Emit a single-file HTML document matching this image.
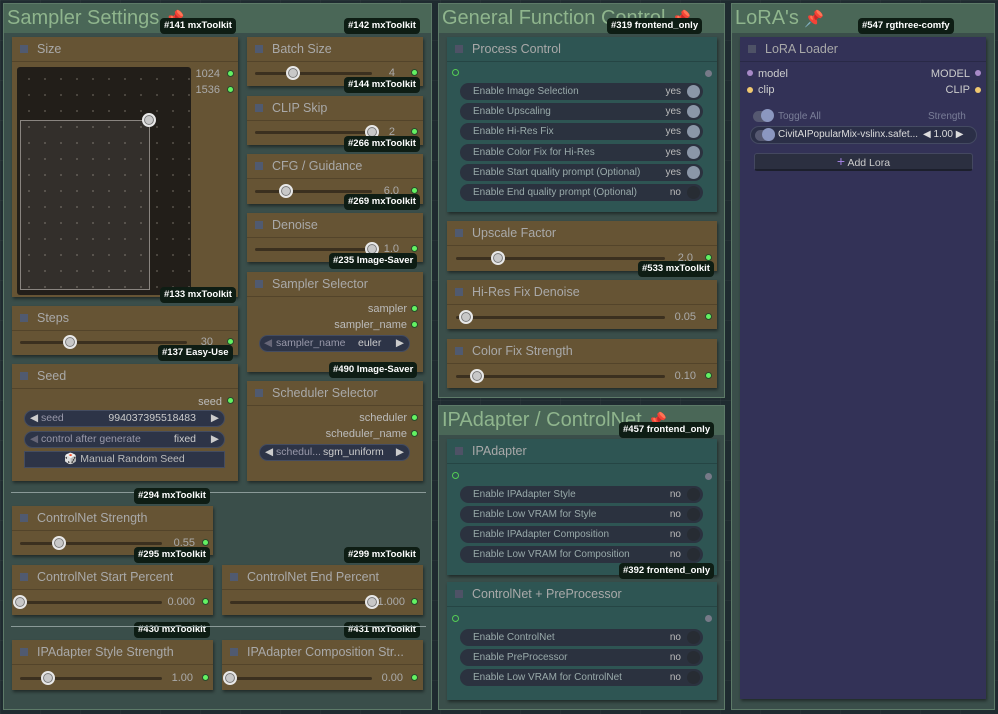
<!DOCTYPE html>
<html><head><meta charset="utf-8"><style>
*{box-sizing:border-box;margin:0;padding:0}
body{width:998px;height:714px;background:#1f2b30;font-family:"Liberation Sans",sans-serif;position:relative;overflow:hidden;
background-image:linear-gradient(rgba(255,255,255,.03) 1px,transparent 1px),linear-gradient(90deg,rgba(255,255,255,.03) 1px,transparent 1px);background-size:40px 40px}
.a{position:absolute}
.g{position:absolute;background:#3a4e4a;border:1px solid #5d7a68}
.gt{position:absolute;left:0;top:0;right:0;height:29px;background:#4a6757;color:#8fb58d;font-size:20px;line-height:29px;padding-left:3px;white-space:nowrap;overflow:hidden}
.n{position:absolute;background:#665434;box-shadow:1px 2px 3px rgba(0,0,0,.45)}
.n.teal{background:#2e5553}
.n.pur{background:#333257}
.t{height:25px;border-bottom:1px solid rgba(0,0,0,.18);color:#a9a9a9;font-size:12.5px;line-height:24px;padding-left:25px;position:relative;white-space:nowrap;overflow:hidden}
.t:before{content:"";position:absolute;left:8px;top:8px;width:8px;height:8px;background:#505a70}
.teal .t:before,.pur .t:before{background:#4e5266}
.b{position:absolute;background:#0e1d14;color:#fff;font-size:9.5px;font-weight:bold;height:16px;line-height:16px;padding:0 4px;border-radius:4px;white-space:nowrap;z-index:5}
.trk{position:absolute;height:3px;background:#3b301f;border-radius:2px}
.k{position:absolute;width:14px;height:14px;border-radius:50%;background:#c8c8c8;border:2px solid #e8e8e8;box-shadow:0 0 0 1px #777 inset;z-index:2}
.v{position:absolute;width:50px;text-align:right;color:#aaa;font-size:11px}
.d{position:absolute;width:7px;height:7px;border-radius:50%;background:#63f263;border:1px solid #2a4a2a}
.lbl{position:absolute;color:#bbb;font-size:11px;text-align:right;width:120px}
.pill{position:absolute;height:17px;border-radius:9px;background:#2b323f;color:#9aa;font-size:10px;line-height:17px;padding-left:13px;white-space:nowrap}
.pill .y{position:absolute;right:22px;top:0;color:#bbb}
.pill .c{position:absolute;right:3px;top:2px;width:13px;height:13px;border-radius:50%;background:#8b97a8}
.pill .c.off{background:#272c33}
.cb{position:absolute;height:17px;border-radius:9px;background:#2d3447;border:1px solid #444c60;color:#aaa;font-size:10.5px;line-height:15px}
.pin{color:#e23a6a;font-size:16px}
</style></head><body>

<div class="g" style="left:3px;top:3px;width:429px;height:707px"><div class="gt">Sampler Settings <span class="pin">📌</span></div></div>
<div class="g" style="left:438px;top:3px;width:287px;height:395px"><div class="gt">General Function Control <span class="pin">📌</span></div></div>
<div class="g" style="left:438px;top:405px;width:287px;height:305px"><div class="gt">IPAdapter / ControlNet <span class="pin">📌</span></div></div>
<div class="g" style="left:731px;top:3px;width:264px;height:707px"><div class="gt">LoRA's <span class="pin">📌</span></div></div>

<div class="n" style="left:12px;top:37px;width:226px;height:260px"><div class="t">Size</div></div>
<div class="a" style="left:17px;top:67px;width:174px;height:228px;background:#221e19;border-radius:3px;background-image:radial-gradient(#57524a 0.8px,transparent 1px);background-size:16px 16px;background-position:4px 4px"></div>
<div class="a" style="left:20px;top:120px;width:130px;height:170px;border:1px solid #8a8580;background:rgba(255,255,255,.08)"></div>
<div class="k" style="left:142px;top:113px"></div>
<div class="v" style="left:170px;top:68px">1024</div><div class="d" style="left:227px;top:70px"></div>
<div class="v" style="left:170px;top:84px">1536</div><div class="d" style="left:227px;top:86px"></div>

<div class="n" style="left:247px;top:37px;width:176px;height:49px"><div class="t">Batch Size</div></div>
<div class="trk" style="left:255px;top:72px;width:117px"></div><div class="k" style="left:286px;top:66px"></div><div class="v" style="left:345px;top:67px">4</div><div class="d" style="left:411px;top:69px"></div>
<div class="n" style="left:247px;top:96px;width:176px;height:49px"><div class="t">CLIP Skip</div></div>
<div class="trk" style="left:255px;top:131px;width:117px"></div><div class="k" style="left:365px;top:125px"></div><div class="v" style="left:345px;top:126px">2</div><div class="d" style="left:411px;top:128px"></div>
<div class="n" style="left:247px;top:154px;width:176px;height:50px"><div class="t">CFG / Guidance</div></div>
<div class="trk" style="left:255px;top:190px;width:117px"></div><div class="k" style="left:279px;top:184px"></div><div class="v" style="left:349px;top:185px">6.0</div><div class="d" style="left:411px;top:187px"></div>
<div class="n" style="left:247px;top:213px;width:176px;height:49px"><div class="t">Denoise</div></div>
<div class="trk" style="left:255px;top:248px;width:117px"></div><div class="k" style="left:365px;top:242px"></div><div class="v" style="left:349px;top:243px">1.0</div><div class="d" style="left:411px;top:245px"></div>

<div class="n" style="left:247px;top:272px;width:176px;height:100px"><div class="t">Sampler Selector</div></div>
<div class="lbl" style="left:287px;top:303px">sampler</div><div class="d" style="left:411px;top:305px"></div>
<div class="lbl" style="left:287px;top:319px">sampler_name</div><div class="d" style="left:411px;top:321px"></div>
<div class="cb" style="left:259px;top:335px;width:151px"><span class="a" style="left:4px;color:#667">◀</span><span class="a" style="left:16px;color:#99a">sampler_name</span><span class="a" style="left:98px;color:#ccc">euler</span><span class="a" style="right:5px;color:#ccc">▶</span></div>

<div class="n" style="left:247px;top:381px;width:176px;height:100px"><div class="t">Scheduler Selector</div></div>
<div class="lbl" style="left:287px;top:412px">scheduler</div><div class="d" style="left:411px;top:414px"></div>
<div class="lbl" style="left:287px;top:428px">scheduler_name</div><div class="d" style="left:411px;top:430px"></div>
<div class="cb" style="left:259px;top:444px;width:151px"><span class="a" style="left:5px;color:#ccc">◀</span><span class="a" style="left:16px;color:#99a">schedul...</span><span class="a" style="left:63px;color:#ccc">sgm_uniform</span><span class="a" style="right:5px;color:#ccc">▶</span></div>

<div class="n" style="left:12px;top:306px;width:226px;height:49px"><div class="t">Steps</div></div>
<div class="trk" style="left:20px;top:341px;width:167px"></div><div class="k" style="left:63px;top:335px"></div><div class="v" style="left:163px;top:336px">30</div><div class="d" style="left:227px;top:338px"></div>

<div class="n" style="left:12px;top:364px;width:226px;height:117px"><div class="t">Seed</div></div>
<div class="lbl" style="left:102px;top:396px">seed</div><div class="d" style="left:227px;top:397px"></div>
<div class="cb" style="left:24px;top:410px;width:201px"><span class="a" style="left:5px;color:#ccc">◀</span><span class="a" style="left:16px;color:#99a">seed</span><span class="a" style="right:28px;color:#ccc">994037395518483</span><span class="a" style="right:5px;color:#ccc">▶</span></div>
<div class="cb" style="left:24px;top:431px;width:201px"><span class="a" style="left:5px;color:#667">◀</span><span class="a" style="left:16px;color:#99a">control after generate</span><span class="a" style="right:28px;color:#ccc">fixed</span><span class="a" style="right:5px;color:#ccc">▶</span></div>
<div class="a" style="left:24px;top:451px;width:201px;height:17px;background:#2d3447;border:1px solid #444c60;color:#bbb;font-size:10.5px;line-height:15px;text-align:center">🎲 Manual Random Seed</div>

<div class="a" style="left:11px;top:492px;width:415px;height:1px;background:#8a9a98"></div>
<div class="a" style="left:11px;top:626px;width:415px;height:1px;background:#8a9a98;z-index:6"></div>

<div class="n" style="left:12px;top:506px;width:201px;height:49px"><div class="t">ControlNet Strength</div></div>
<div class="trk" style="left:20px;top:542px;width:142px"></div><div class="k" style="left:52px;top:536px"></div><div class="v" style="left:145px;top:537px">0.55</div><div class="d" style="left:202px;top:539px"></div>

<div class="n" style="left:12px;top:565px;width:201px;height:50px"><div class="t">ControlNet Start Percent</div></div>
<div class="trk" style="left:20px;top:601px;width:142px"></div><div class="k" style="left:13px;top:595px"></div><div class="v" style="left:145px;top:596px">0.000</div><div class="d" style="left:202px;top:598px"></div>
<div class="n" style="left:222px;top:565px;width:201px;height:50px"><div class="t">ControlNet End Percent</div></div>
<div class="trk" style="left:230px;top:601px;width:142px"></div><div class="k" style="left:365px;top:595px"></div><div class="v" style="left:355px;top:596px">1.000</div><div class="d" style="left:411px;top:598px"></div>

<div class="n" style="left:12px;top:640px;width:201px;height:50px"><div class="t">IPAdapter Style Strength</div></div>
<div class="trk" style="left:20px;top:677px;width:142px"></div><div class="k" style="left:41px;top:671px"></div><div class="v" style="left:143px;top:672px">1.00</div><div class="d" style="left:202px;top:674px"></div>
<div class="n" style="left:222px;top:640px;width:201px;height:50px"><div class="t">IPAdapter Composition Str...</div></div>
<div class="trk" style="left:230px;top:677px;width:142px"></div><div class="k" style="left:223px;top:671px"></div><div class="v" style="left:353px;top:672px">0.00</div><div class="d" style="left:411px;top:674px"></div>

<div class="n teal" style="left:447px;top:37px;width:270px;height:175px"><div class="t">Process Control</div></div>
<div class="a" style="left:452px;top:69px;width:7px;height:7px;border-radius:50%;border:1px solid #5c5;background:#2e5553"></div>
<div class="a" style="left:705px;top:70px;width:7px;height:7px;border-radius:50%;background:#777a88"></div>
<div class="pill" style="left:460px;top:83px;width:243px">Enable Image Selection<span class="y">yes</span><span class="c"></span></div>
<div class="pill" style="left:460px;top:103px;width:243px">Enable Upscaling<span class="y">yes</span><span class="c"></span></div>
<div class="pill" style="left:460px;top:123px;width:243px">Enable Hi-Res Fix<span class="y">yes</span><span class="c"></span></div>
<div class="pill" style="left:460px;top:144px;width:243px">Enable Color Fix for Hi-Res<span class="y">yes</span><span class="c"></span></div>
<div class="pill" style="left:460px;top:164px;width:243px">Enable Start quality prompt (Optional)<span class="y">yes</span><span class="c"></span></div>
<div class="pill" style="left:460px;top:184px;width:243px">Enable End quality prompt (Optional)<span class="y">no</span><span class="c off"></span></div>

<div class="n" style="left:447px;top:221px;width:270px;height:50px"><div class="t">Upscale Factor</div></div>
<div class="trk" style="left:456px;top:257px;width:209px"></div><div class="k" style="left:491px;top:251px"></div><div class="v" style="left:643px;top:252px">2.0</div><div class="d" style="left:705px;top:254px"></div>
<div class="n" style="left:447px;top:280px;width:270px;height:49px"><div class="t">Hi-Res Fix Denoise</div></div>
<div class="trk" style="left:456px;top:316px;width:209px"></div><div class="k" style="left:459px;top:310px"></div><div class="v" style="left:646px;top:311px">0.05</div><div class="d" style="left:705px;top:313px"></div>
<div class="n" style="left:447px;top:339px;width:270px;height:49px"><div class="t">Color Fix Strength</div></div>
<div class="trk" style="left:456px;top:375px;width:209px"></div><div class="k" style="left:470px;top:369px"></div><div class="v" style="left:646px;top:370px">0.10</div><div class="d" style="left:705px;top:372px"></div>

<div class="n teal" style="left:447px;top:439px;width:270px;height:136px"><div class="t">IPAdapter</div></div>
<div class="a" style="left:452px;top:472px;width:7px;height:7px;border-radius:50%;border:1px solid #5c5"></div>
<div class="a" style="left:705px;top:473px;width:7px;height:7px;border-radius:50%;background:#777a88"></div>
<div class="pill" style="left:460px;top:486px;width:243px">Enable IPAdapter Style<span class="y">no</span><span class="c off"></span></div>
<div class="pill" style="left:460px;top:506px;width:243px">Enable Low VRAM for Style<span class="y">no</span><span class="c off"></span></div>
<div class="pill" style="left:460px;top:526px;width:243px">Enable IPAdapter Composition<span class="y">no</span><span class="c off"></span></div>
<div class="pill" style="left:460px;top:546px;width:243px">Enable Low VRAM for Composition<span class="y">no</span><span class="c off"></span></div>

<div class="n teal" style="left:447px;top:582px;width:270px;height:118px"><div class="t">ControlNet + PreProcessor</div></div>
<div class="a" style="left:452px;top:615px;width:7px;height:7px;border-radius:50%;border:1px solid #5c5"></div>
<div class="a" style="left:705px;top:615px;width:7px;height:7px;border-radius:50%;background:#777a88"></div>
<div class="pill" style="left:460px;top:629px;width:243px">Enable ControlNet<span class="y">no</span><span class="c off"></span></div>
<div class="pill" style="left:460px;top:649px;width:243px">Enable PreProcessor<span class="y">no</span><span class="c off"></span></div>
<div class="pill" style="left:460px;top:669px;width:243px">Enable Low VRAM for ControlNet<span class="y">no</span><span class="c off"></span></div>

<div class="n pur" style="left:740px;top:37px;width:246px;height:662px"><div class="t">LoRA Loader</div></div>
<div class="a" style="left:747px;top:70px;width:6px;height:6px;border-radius:50%;background:#a88ac8"></div>
<div class="a" style="left:758px;top:68px;color:#ccc;font-size:11px">model</div>
<div class="a" style="left:747px;top:87px;width:6px;height:6px;border-radius:50%;background:#f0c870"></div>
<div class="a" style="left:758px;top:84px;color:#ccc;font-size:11px">clip</div>
<div class="a" style="left:920px;top:68px;color:#ccc;font-size:11px;width:50px;text-align:right">MODEL</div>
<div class="a" style="left:975px;top:70px;width:6px;height:6px;border-radius:50%;background:#a88ac8"></div>
<div class="a" style="left:920px;top:84px;color:#ccc;font-size:11px;width:50px;text-align:right">CLIP</div>
<div class="a" style="left:975px;top:87px;width:6px;height:6px;border-radius:50%;background:#f0c870"></div>
<div class="a" style="left:753px;top:111px;width:20px;height:11px;border-radius:6px;background:#555870"></div>
<div class="a" style="left:761px;top:109px;width:13px;height:13px;border-radius:50%;background:#8b97c0"></div>
<div class="a" style="left:778px;top:111px;color:#7a7e98;font-size:10px">Toggle All</div>
<div class="a" style="left:928px;top:111px;color:#7a7e98;font-size:10px">Strength</div>
<div class="a" style="left:750px;top:126px;width:227px;height:18px;border-radius:9px;background:#2b2f47;border:1px solid #444a62"></div>
<div class="a" style="left:755px;top:130px;width:20px;height:11px;border-radius:6px;background:#555870"></div>
<div class="a" style="left:762px;top:128px;width:13px;height:13px;border-radius:50%;background:#8b97c0"></div>
<div class="a" style="left:778px;top:129px;color:#ddd;font-size:10px">CivitAIPopularMix-vslinx.safet...</div>
<div class="a" style="left:923px;top:129px;color:#ddd;font-size:10px">◀ 1.00 ▶</div>
<div class="a" style="left:754px;top:153px;width:219px;height:18px;border-radius:3px;background:#2b2f40;border:1px solid #444860;border-bottom:2px solid #1c1f2c;color:#ccc;font-size:10.5px;line-height:15px;text-align:center"><span style="color:#a080e0;font-size:14px">+</span> Add Lora</div>

<div class="b" style="left:160px;top:18px">#141 mxToolkit</div>
<div class="b" style="left:344px;top:18px">#142 mxToolkit</div>
<div class="b" style="left:344px;top:77px">#144 mxToolkit</div>
<div class="b" style="left:344px;top:136px">#266 mxToolkit</div>
<div class="b" style="left:344px;top:194px">#269 mxToolkit</div>
<div class="b" style="left:329px;top:253px">#235 Image-Saver</div>
<div class="b" style="left:160px;top:287px">#133 mxToolkit</div>
<div class="b" style="left:158px;top:345px">#137 Easy-Use</div>
<div class="b" style="left:329px;top:362px">#490 Image-Saver</div>
<div class="b" style="left:134px;top:488px">#294 mxToolkit</div>
<div class="b" style="left:134px;top:547px">#295 mxToolkit</div>
<div class="b" style="left:344px;top:547px">#299 mxToolkit</div>
<div class="b" style="left:134px;top:622px">#430 mxToolkit</div>
<div class="b" style="left:344px;top:622px">#431 mxToolkit</div>
<div class="b" style="left:607px;top:18px">#319 frontend_only</div>
<div class="b" style="left:638px;top:261px">#533 mxToolkit</div>
<div class="b" style="left:619px;top:422px">#457 frontend_only</div>
<div class="b" style="left:619px;top:563px">#392 frontend_only</div>
<div class="b" style="left:858px;top:18px">#547 rgthree-comfy</div>
</body></html>
